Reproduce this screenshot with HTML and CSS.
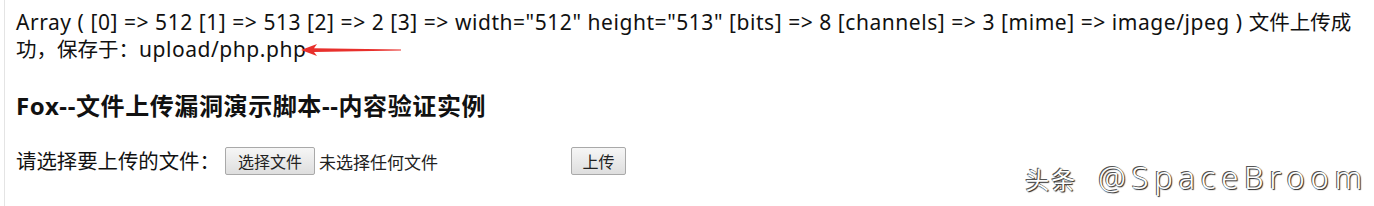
FILE: index.html
```html
<!DOCTYPE html>
<html lang="zh-CN">
<head>
<meta charset="utf-8">
<link rel="stylesheet" href="styles.css">
</head>
<body>
<div class="page">
  <p class="result">Array ( [0] =&gt; 512 [1] =&gt; 513 [2] =&gt; 2 [3] =&gt; width="512" height="513" [bits] =&gt; 8 [channels] =&gt; 3 [mime] =&gt; image/jpeg ) <span class="cjk">文件上传成</span><span class="cjk">功，保存于：</span><span class="path">upload/php.php<svg class="arrow" width="100" height="14" viewBox="0 0 100 14"><path d="M0 7 L16 1 L13 5.2 L100 6.4 L100 7.4 L13 9 L16 13 Z" fill="#e8302c"/></svg></span></p>
  <h3 class="title">Fox--文件上传漏洞演示脚本--内容验证实例</h3>
  <form class="upload">
    <span class="label">请选择要上传的文件：</span>
    <span class="file"><span class="btn">选择文件</span><span class="nofile">未选择任何文件</span></span>
    <span class="btn submit">上传</span>
  </form>
  <div class="mark"><span class="mark-cjk">头条</span><span class="mark-latin">@SpaceBroom</span></div>
</div>
</body>
</html>
```

FILE: styles.css
```css
html, body {
  margin: 0;
  padding: 0;
  background: #fff;
}
body {
  font-family: "Noto Sans", "Noto Sans CJK SC", sans-serif;
  color: #111;
}
.page {
  position: relative;
  margin-left: 4px;
  border-left: 1px solid #e4e4e4;
  height: 206px;
  padding: 9px 18px 0 11px;
  box-sizing: border-box;
}
.result {
  margin: 0;
  font-size: 21px;
  letter-spacing: 0.55px;
  line-height: 27px;
}
.cjk {
  font-size: 20.5px;
  letter-spacing: 0;
}
.path {
  position: relative;
}
.arrow {
  position: absolute;
  left: 100%;
  top: 8px;
  margin-left: -5px;
}
.title {
  margin: 28px 0 0;
  font-size: 24px;
  font-weight: bold;
  letter-spacing: 0.6px;
  line-height: 30px;
  color: #111;
}
.upload {
  display: flex;
  align-items: center;
  margin-top: 26px;
  font-size: 20.4px;
}
.label {
  line-height: 28px;
  margin-right: 5px;
}
.file {
  display: flex;
  align-items: center;
  width: 346px;
}
.btn {
  display: inline-flex;
  align-items: center;
  justify-content: center;
  height: 28px;
  box-sizing: border-box;
  padding: 0 12px;
  border: 1px solid #a9a9a9;
  border-radius: 2px;
  background: linear-gradient(#f6f6f6, #dedede);
  font-family: "Noto Sans CJK SC", sans-serif;
  font-size: 16px;
  color: #222;
}
.nofile {
  margin-left: 4px;
  font-family: "Noto Sans CJK SC", sans-serif;
  font-size: 17px;
  color: #222;
}
.submit {
  width: 55px;
  padding: 0;
}
.mark {
  position: absolute;
  right: 6px;
  bottom: 8px;
  display: flex;
  align-items: baseline;
  gap: 21px;
  color: #fff;
  text-shadow: -1px -1px 0 #555, 1px 1px 1px #222, 0 0 1px #444;
}
.mark-cjk {
  font-family: "Noto Sans CJK SC", sans-serif;
  font-size: 24px;
  letter-spacing: 2px;
}
.mark-latin {
  font-family: "Noto Sans", sans-serif;
  font-size: 31px;
  font-weight: 300;
  letter-spacing: 5.7px;
}
```
